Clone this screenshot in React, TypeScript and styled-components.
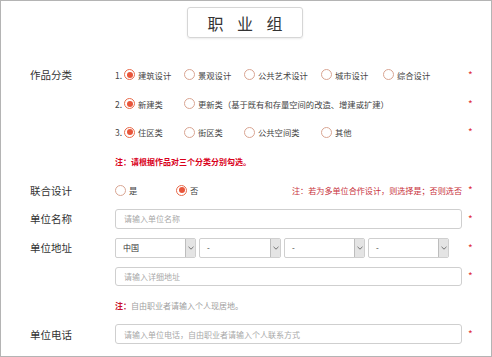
import React from 'react';
import styled, { createGlobalStyle } from 'styled-components';

const Global = createGlobalStyle`
  html, body { margin: 0; padding: 0; background: #fff; }
  body { font-family: "Noto Sans CJK SC", "Noto Sans", sans-serif; }
  * { box-sizing: border-box; }
`;

const Frame = styled.div`
  width: 492px;
  height: 357px;
  border: 1px solid #b4b4b4;
  background: #fff;
  display: flex;
  flex-direction: column;
`;

const TitleBox = styled.div`
  align-self: center;
  margin-top: 6px;
  margin-right: 2px;
  width: 116px;
  height: 31px;
  border: 1px solid #d6d6d6;
  border-radius: 3px;
  box-shadow: 0 1px 2px rgba(0, 0, 0, 0.08);
  display: flex;
  align-items: center;
  justify-content: center;
  font-size: 16px;
  color: #333;
  letter-spacing: 13.5px;
  padding-left: 13.5px;
`;

const Form = styled.div`
  margin-top: 22.5px;
  display: flex;
  flex-direction: column;
`;

const Row = styled.div`
  display: grid;
  grid-template-columns: 85px 347px 1fr;
  padding-left: 29px;
  height: 28.8px;
  align-items: center;
`;

const Label = styled.div`
  font-size: 10.5px;
  color: #333;
`;

const Star = styled.div`
  padding-left: 6px;
  color: #e0303a;
  font-size: 10px;
  line-height: 1;
`;

const OptionGrid = styled.div`
  display: grid;
  grid-template-columns: 9px 60px 60px 77px 62px auto;
  align-items: center;
`;

const Num = styled.span`
  font-size: 8.5px;
  color: #444;
`;

const Option = styled.label`
  display: flex;
  align-items: center;
  gap: 3px;
  font-size: 8.3px;
  color: #444;
  white-space: nowrap;
`;

const Circle = styled.span<{ $checked?: boolean }>`
  width: 11px;
  height: 11px;
  flex: none;
  border-radius: 50%;
  border: 1px solid ${(p) => (p.$checked ? '#e86a4a' : '#d9a592')};
  background: #fff;
  display: flex;
  align-items: center;
  justify-content: center;
  &::after {
    content: '';
    width: 6px;
    height: 6px;
    border-radius: 50%;
    background: ${(p) => (p.$checked ? '#e8553a' : 'transparent')};
  }
`;

const NoteBold = styled.div`
  font-size: 8px;
  font-weight: 700;
  color: #d9001b;
  white-space: nowrap;
`;

const JointField = styled.div`
  display: flex;
  align-items: center;
`;

const JointOption = styled(Option)`
  width: 61px;
`;

const SideNote = styled.span`
  margin-left: auto;
  font-size: 8.1px;
  color: #c8323c;
  white-space: nowrap;
`;

const TextInput = styled.input`
  width: 347px;
  height: 19.5px;
  border: 1px solid #cfcfcf;
  border-radius: 3px;
  padding: 0 0 0 8px;
  font-family: inherit;
  font-size: 8px;
  color: #333;
  background: #fff;
  outline: none;
  &::placeholder {
    color: #a8a8a8;
  }
`;

const SelectRow = styled.div`
  display: grid;
  grid-template-columns: 81px 82px 81px 81px;
  column-gap: 3px;
`;

const SelectBox = styled.div`
  height: 20px;
  border: 1px solid #cfcfcf;
  border-radius: 2px;
  display: flex;
  align-items: center;
  justify-content: space-between;
  padding-left: 7px;
  font-size: 8px;
  color: #333;
  background: #fff;
`;

const Arrow = styled.span`
  width: 10px;
  height: 18px;
  background: #e4e4e4;
  border-left: 1px solid #bdbdbd;
  border-radius: 0 1px 1px 0;
  display: flex;
  align-items: center;
  justify-content: center;
`;

const Note = styled.div`
  font-size: 8px;
  color: #a0a0a0;
  white-space: nowrap;
`;

const NoteMark = styled.b`
  color: #c8102e;
`;

function Radio({ checked, children }: { checked?: boolean; children: React.ReactNode }) {
  return (
    <Option>
      <Circle $checked={checked} />
      {children}
    </Option>
  );
}

function Select({ value }: { value: string }) {
  return (
    <SelectBox>
      <span>{value}</span>
      <Arrow>
        <svg width="6" height="4" viewBox="0 0 6 4">
          <path d="M0.5 0.8 L3 3.2 L5.5 0.8" fill="none" stroke="#666" strokeWidth="0.9" />
        </svg>
      </Arrow>
    </SelectBox>
  );
}

export default function App() {
  return (
    <>
      <Global />
      <Frame>
        <TitleBox>职业组</TitleBox>
        <Form>
          <Row>
            <Label>作品分类</Label>
            <OptionGrid>
              <Num>1.</Num>
              <Radio checked>建筑设计</Radio>
              <Radio>景观设计</Radio>
              <Radio>公共艺术设计</Radio>
              <Radio>城市设计</Radio>
              <Radio>综合设计</Radio>
            </OptionGrid>
            <Star>*</Star>
          </Row>
          <Row>
            <span />
            <OptionGrid>
              <Num>2.</Num>
              <Radio checked>新建类</Radio>
              <Radio>更新类（基于既有和存量空间的改造、增建或扩建）</Radio>
            </OptionGrid>
            <Star>*</Star>
          </Row>
          <Row>
            <span />
            <OptionGrid>
              <Num>3.</Num>
              <Radio checked>住区类</Radio>
              <Radio>街区类</Radio>
              <Radio>公共空间类</Radio>
              <Radio>其他</Radio>
            </OptionGrid>
            <Star>*</Star>
          </Row>
          <Row>
            <span />
            <NoteBold>注：请根据作品对三个分类分别勾选。</NoteBold>
          </Row>
          <Row>
            <Label>联合设计</Label>
            <JointField>
              <JointOption>
                <Circle />是
              </JointOption>
              <JointOption>
                <Circle $checked />否
              </JointOption>
              <SideNote>注：若为多单位合作设计，则选择是；否则选否</SideNote>
            </JointField>
            <Star>*</Star>
          </Row>
          <Row>
            <Label>单位名称</Label>
            <TextInput placeholder="请输入单位名称" />
            <Star>*</Star>
          </Row>
          <Row>
            <Label>单位地址</Label>
            <SelectRow>
              <Select value="中国" />
              <Select value="-" />
              <Select value="-" />
              <Select value="-" />
            </SelectRow>
            <Star>*</Star>
          </Row>
          <Row>
            <span />
            <TextInput placeholder="请输入详细地址" />
            <Star>*</Star>
          </Row>
          <Row>
            <span />
            <Note>
              <NoteMark>注：</NoteMark>自由职业者请输入个人现居地。
            </Note>
          </Row>
          <Row>
            <Label>单位电话</Label>
            <TextInput placeholder="请输入单位电话，自由职业者请输入个人联系方式" />
            <Star>*</Star>
          </Row>
        </Form>
      </Frame>
    </>
  );
}
